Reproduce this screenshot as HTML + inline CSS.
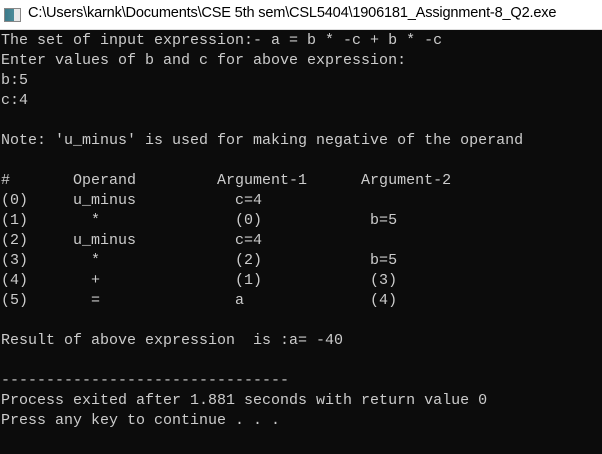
<!DOCTYPE html>
<html><head><meta charset="utf-8"><style>
html,body{margin:0;padding:0;width:602px;height:454px;overflow:hidden;background:#0c0c0c}
#title{position:absolute;left:0;top:0;width:602px;height:29px;background:#fff;border-bottom:1px solid #ddd}
#icon{position:absolute;left:4px;top:8px;width:15px;height:12px;border:1px solid #888;background:linear-gradient(90deg,#3d7a8a 0,#4a8a98 9px,#e8e8e8 9px)}
#tt{position:absolute;left:28px;top:5px;font:14.6px "Liberation Sans",sans-serif;color:#000;white-space:nowrap;letter-spacing:-0.2px}
pre{position:absolute;left:1px;top:31px;margin:0;font:15px/20px "Liberation Mono",monospace;color:#cccccc}
</style></head><body>
<div id="title"><div id="icon"></div><div id="tt">C:\Users\karnk\Documents\CSE 5th sem\CSL5404\1906181_Assignment-8_Q2.exe</div></div>
<pre>The set of input expression:- a = b * -c + b * -c
Enter values of b and c for above expression:
b:5
c:4

Note: 'u_minus' is used for making negative of the operand

#       Operand         Argument-1      Argument-2
(0)     u_minus           c=4
(1)       *               (0)            b=5
(2)     u_minus           c=4
(3)       *               (2)            b=5
(4)       +               (1)            (3)
(5)       =               a              (4)

Result of above expression  is :a= -40

--------------------------------
Process exited after 1.881 seconds with return value 0
Press any key to continue . . .</pre>
</body></html>
